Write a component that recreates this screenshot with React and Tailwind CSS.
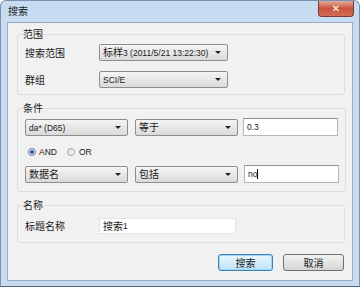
import React from "react";

const cjk = { fontFamily: '"Noto Sans CJK SC", "Liberation Sans", sans-serif' };

function Latin({ children }) {
	return (
		<span className="text-[8.5px] leading-none" style={{ fontFamily: '"Liberation Sans", sans-serif' }}>
			{children}
		</span>
	);
}

function Combo({ className, children }) {
	return (
		<div
			className={
				"flex items-center justify-between h-[17px] border border-[#8e8e8e] rounded-[2px] bg-gradient-to-b from-[#f5f5f5] to-[#dadada] pl-[3px] pr-[6px] text-[10px] leading-none text-[#1a1a1a] " +
				className
			}
		>
			<span className="whitespace-nowrap">{children}</span>
			<span className="w-0 h-0 border-x-[3px] border-x-transparent border-t-[3px] border-t-[#222]" />
		</div>
	);
}

function TextBox({ className, children }) {
	return (
		<div
			className={
				"flex items-center bg-white border border-[#b4b6bb] border-t-[#8f9298] pl-[3px] text-[10px] leading-none text-[#1a1a1a] " +
				className
			}
		>
			{children}
		</div>
	);
}

function Group({ title, className, children }) {
	return (
		<fieldset className={"border border-[#d8dde2] rounded-[3px] pl-[7px] pr-[6px] " + className}>
			<legend className="-ml-[3px] px-[1px] text-[10px] leading-[12px] text-[#1a1a1a]">{title}</legend>
			{children}
		</fieldset>
	);
}

export default function App() {
	return (
		<div
			className="w-[360px] h-[287px] flex flex-col bg-gradient-to-b from-[#c8dcf1] to-[#c9dbee] border border-[#7891b0] border-b-[#4d6482] rounded-t-[6px] overflow-hidden"
			style={cjk}
		>
			<div className="h-[21px] flex items-start justify-between pl-[7px] pr-[5px] shrink-0">
				<span className="mt-[4px] text-[10px] leading-[12px] text-[#1b1b1b]">搜索</span>
				<div className="w-[36px] h-[16px] rounded-b-[4px] border border-t-0 border-[#7d3a35] bg-gradient-to-b from-[#e3a99c] via-[#c9523f] to-[#d46d56] flex items-center justify-center">
					<span className="text-white text-[10px] leading-none font-bold" style={{ fontFamily: '"DejaVu Sans", sans-serif' }}>
						✕
					</span>
				</div>
			</div>

			<div className="mx-[6px] mb-[5px] flex-1 bg-[#f1f1f1] border border-[#98abc3] flex flex-col pl-[9px] pr-[7px] text-[#1a1a1a]">
				<Group title="范围" className="mt-[5px] h-[67px]">
					<div className="mt-[4px] flex items-center">
						<span className="w-[74px] text-[10px] leading-none">搜索范围</span>
						<Combo className="w-[129px]">
							标样<Latin>3 (2011/5/21 13:22:30)</Latin>
						</Combo>
					</div>
					<div className="mt-[10px] flex items-center">
						<span className="w-[74px] text-[10px] leading-none">群组</span>
						<Combo className="w-[129px]">
							<Latin>SCI/E</Latin>
						</Combo>
					</div>
				</Group>

				<Group title="条件" className="mt-[7px] h-[90px]">
					<div className="mt-[4px] flex items-center">
						<Combo className="w-[103px]">
							<Latin>da* (D65)</Latin>
						</Combo>
						<Combo className="w-[103px] ml-[7px]">等于</Combo>
						<TextBox className="w-[95px] h-[18px] ml-[5px]">
							<Latin>0.3</Latin>
						</TextBox>
					</div>
					<div className="mt-[10px] h-[12px] flex items-center pl-[3px]">
						<span className="w-[8px] h-[8px] rounded-full border border-[#6f7c8c] bg-[#e9eef3] flex items-center justify-center">
							<span className="w-[4px] h-[4px] rounded-full bg-[#2a5a9c]" />
						</span>
						<span className="ml-[3px] flex items-center">
							<Latin>AND</Latin>
						</span>
						<span className="ml-[10px] w-[8px] h-[8px] rounded-full border border-[#a3a9b1] bg-gradient-to-br from-[#d8dce0] to-[#f8f8f8]" />
						<span className="ml-[4px] flex items-center">
							<Latin>OR</Latin>
						</span>
					</div>
					<div className="mt-[7px] flex items-center">
						<Combo className="w-[103px]">数据名</Combo>
						<Combo className="w-[103px] ml-[7px]">包括</Combo>
						<TextBox className="w-[95px] h-[18px] ml-[6px]">
							<Latin>no</Latin>
							<span className="w-[1px] h-[10px] bg-black" />
						</TextBox>
					</div>
				</Group>

				<Group title="名称" className="mt-[7px] h-[44px]">
					<div className="mt-[7px] flex items-center">
						<span className="w-[74px] text-[10px] leading-none">标题名称</span>
						<TextBox className="w-[137px] h-[16px] border-[#e4e4e4] border-t-[#e4e4e4]">
							搜索<Latin>1</Latin>
						</TextBox>
					</div>
				</Group>

				<div className="mt-[11px] flex justify-end gap-[10px] pr-[1px]">
					<div className="w-[55px] h-[17px] rounded-[3px] border border-[#3c7fb1] bg-gradient-to-b from-[#eaf6fd] to-[#bee4f8] shadow-[inset_0_0_0_1px_#9fd7f5] flex items-center justify-center text-[10px] leading-none">
						搜索
					</div>
					<div className="w-[61px] h-[17px] rounded-[3px] border border-[#707070] bg-gradient-to-b from-[#f4f4f4] to-[#d4d4d4] flex items-center justify-center text-[10px] leading-none">
						取消
					</div>
				</div>
			</div>
		</div>
	);
}
